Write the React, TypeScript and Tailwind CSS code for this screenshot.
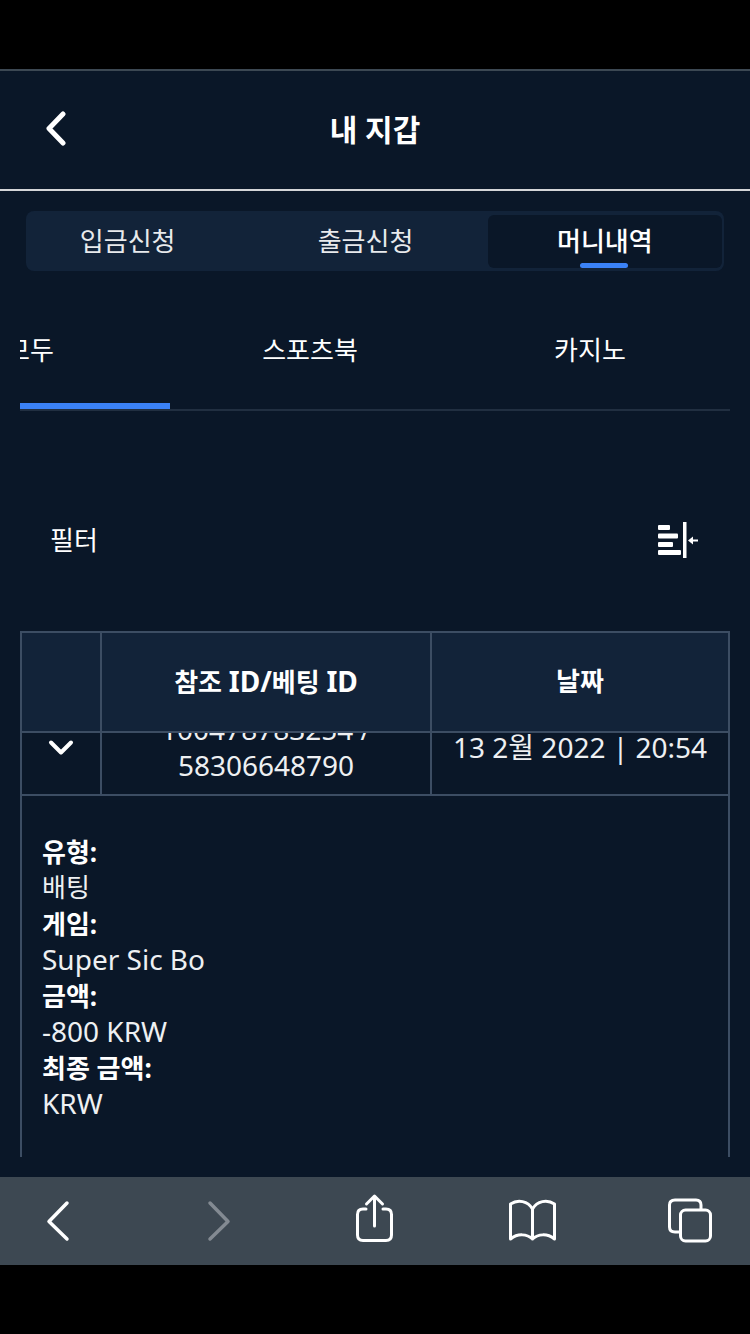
const stack = "font-['Noto_Sans','Noto_Sans_CJK_KR',sans-serif]"

const details = [
  { label: '유형:', value: '배팅', korean: true },
  { label: '게임:', value: 'Super Sic Bo', korean: false },
  { label: '금액:', value: '-800 KRW', korean: false },
  { label: '최종 금액:', value: 'KRW', korean: false },
]

const App = () => {
  return (
    <div className={`${stack} w-[750px] h-[1334px] bg-black text-white flex flex-col overflow-hidden`}>
      <div className="h-[69px] shrink-0" />
      <div className="flex-1 flex flex-col bg-[#0a1728] border-t-2 border-[#3c4853] min-h-0">
        {/* 헤더 */}
        <div className="relative h-[120px] shrink-0 flex items-center justify-center border-b-2 border-[#d4d6d8]">
          <svg className="absolute left-[44px] top-[40px]" width="24" height="36" viewBox="0 0 24 36" fill="none">
            <path d="M19 3 L5 17.500 L19 32" stroke="#fff" strokeWidth="5" strokeLinecap="round" strokeLinejoin="round" />
          </svg>
          <span className="text-[30px] leading-[36px] font-bold">내 지갑</span>
        </div>

        {/* 탭 */}
        <div className="mx-[26px] mt-[20px] h-[60px] shrink-0 rounded-lg bg-[#122339] flex p-[2px] pt-[4px] pb-[3px]">
          <div className="w-[200px] flex items-center justify-center text-[26px] text-[#e8eaec]">입금신청</div>
          <div className="w-[261px] pl-[16px] flex items-center justify-center text-[26px] text-[#e8eaec]">출금신청</div>
          <div className="relative w-[235px] flex items-center justify-center text-[26px] font-medium rounded-md bg-[#0a1728]">
            머니내역
            <div className="absolute bottom-0 left-[92px] w-[48px] h-[5px] rounded-sm bg-[#3b82f6]" />
          </div>
        </div>

        {/* 서브 탭 */}
        <div className="mx-[20px] mt-[57px] shrink-0 overflow-hidden">
          <div className="flex ml-[-130px] h-[45px] items-start text-[26px] leading-[44px]">
            <div className="w-[280px] shrink-0 text-center">모두</div>
            <div className="w-[280px] shrink-0 text-center">스포츠북</div>
            <div className="w-[280px] shrink-0 text-center">카지노</div>
          </div>
          <div className="mt-[30px] w-[150px] h-[6px] bg-[#3b82f6]" />
          <div className="h-[2px] bg-[#212f41]" />
        </div>

        {/* 필터 */}
        <div className="mt-[104px] ml-[50px] mr-[52px] h-[50px] shrink-0 flex items-center justify-between">
          <span className="text-[26px]">필터</span>
          <svg width="40" height="36" viewBox="0 0 40 36" fill="#fff">
            <rect x="0" y="3" width="12" height="5" rx="1" />
            <rect x="0" y="11.500" width="20" height="5" rx="1" />
            <rect x="0" y="20" width="15" height="5" rx="1" />
            <rect x="0" y="28" width="23" height="5" rx="1" />
            <rect x="25" y="0" width="3.500" height="36" />
            <path d="M30 18.500 L35 14.500 V17.500 H40 V19.500 H35 V22.500 Z" />
          </svg>
        </div>

        {/* 표 */}
        <div className="mx-[20px] mt-[66px] h-[526px] shrink-0 overflow-hidden border-x-2 border-[#3c4d63] text-[28px]">
          <div className="h-[102px] flex bg-[#122339] border-y-2 border-[#3c4d63] font-bold text-[26px]">
            <div className="w-[80px] border-r-2 border-[#3c4d63]" />
            <div className="w-[330px] pb-[2px] flex items-center justify-center border-r-2 border-[#3c4d63]">
              <span>참조 <span className="text-[28px]">ID/</span>베팅 <span className="text-[28px]">ID</span></span>
            </div>
            <div className="flex-1 pb-[2px] flex items-center justify-center">날짜</div>
          </div>
          <div className="flex h-[63px] border-b-2 border-[#3c4d63] overflow-hidden">
            <div className="w-[80px] border-r-2 border-[#3c4d63] flex justify-center pt-[6px]">
              <svg width="28" height="18" viewBox="0 0 28 18" fill="none">
                <path d="M4 3.500 L14 13.500 L24 3.500" stroke="#fff" strokeWidth="4" strokeLinecap="round" strokeLinejoin="round" />
              </svg>
            </div>
            <div className="w-[330px] border-r-2 border-[#3c4d63] text-center leading-[36px] text-[#eef0f2] mt-[-22px]">
              <div>100478783254 /</div>
              <div>58306648790</div>
            </div>
            <div className="flex-1 text-center leading-[36px] text-[#eef0f2] mt-[-4px] whitespace-nowrap">
              13 2월 2022 | 20:54
            </div>
          </div>
          <div className="pt-[38px] pl-[20px] text-[26px] leading-[36px] text-[#eef0f2]">
            {details.map(row => (
              <div key={row.label}>
                <div className="font-bold text-white">{row.label}</div>
                {row.korean
                  ? <div className="leading-[34px] mb-[2px]">{row.value}</div>
                  : <div className="text-[28px] leading-[34px] mb-[2px]">{row.value}</div>}
              </div>
            ))}
          </div>
        </div>

        <div className="h-[20px] shrink-0" />

        {/* 브라우저 툴바 */}
        <div className="relative h-[88px] shrink-0 bg-[#3d4852]">
          <svg className="absolute left-0 top-0" width="750" height="88" viewBox="0 0 750 88" fill="none" stroke="#fff" strokeWidth="3" strokeLinecap="round" strokeLinejoin="round">
            <path d="M67 26 L49 44.500 L67 62" strokeWidth="3.500" />
            <path d="M210 26 L228 44.500 L210 62" strokeWidth="3.500" stroke="#838a92" />
            <path d="M366 32 H363 Q357.500 32 357.500 37.500 V58 Q357.500 63.500 363 63.500 H386 Q391.500 63.500 391.500 58 V37.500 Q391.500 32 386 32 H383" />
            <path d="M374.500 49 V19 M366.500 27 L374.500 19 L382.500 27" />
            <path d="M532.500 32 C528 24 518 22 510.500 27 V62 C518 56 527 57 532.500 62 C538 57 547 56 554.500 62 V27 C547 22 537 24 532.500 32 Z M532.500 32 V62" />
            <path d="M679 55 H675 Q669.500 55 669.500 50 V28 Q669.500 23 675 23 H696 Q701 23 701 28 V32" />
            <rect x="680.500" y="33" width="30" height="31" rx="5" />
          </svg>
        </div>

        <div className="flex-1 bg-black" />
      </div>
    </div>
  )
}

export default App
